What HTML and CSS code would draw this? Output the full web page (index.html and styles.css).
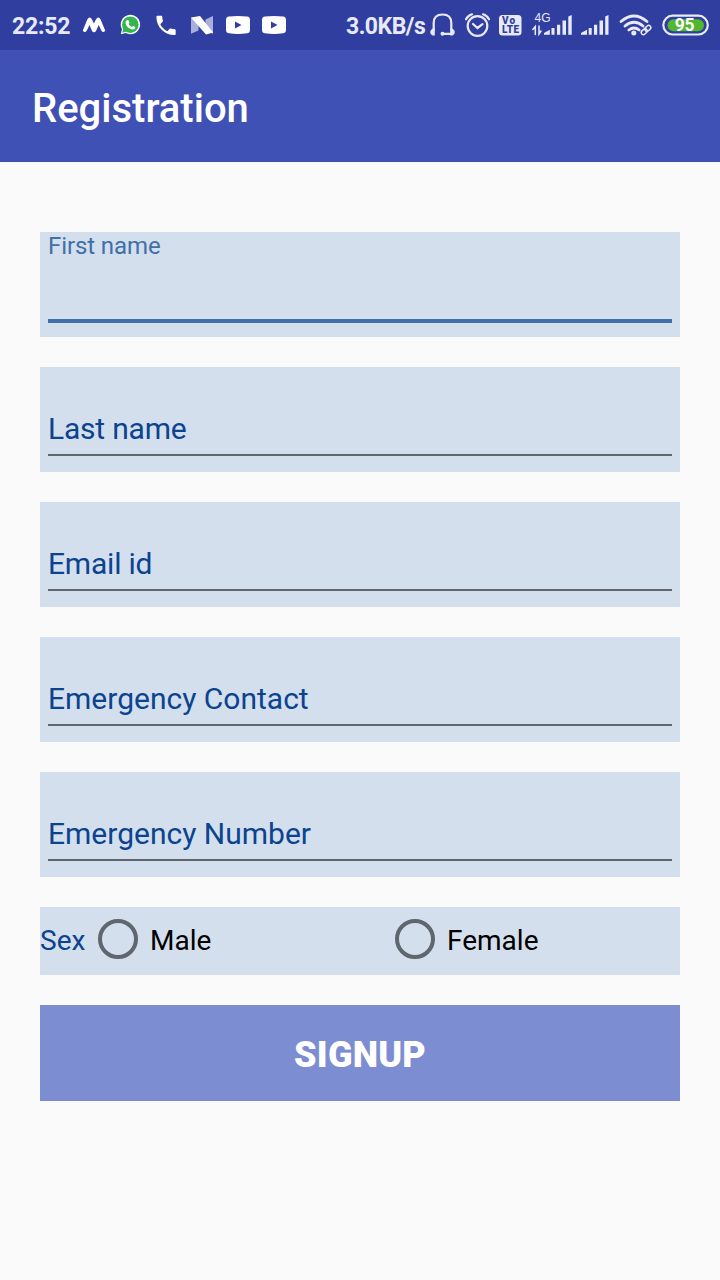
FILE: index.html
```html
<!DOCTYPE html>
<html lang="en">
<head>
<meta charset="utf-8">
<title>Registration</title>
<link rel="stylesheet" href="styles.css">
</head>
<body>
<header class="status-bar">
  <div class="notifications">
    <span class="clock">22:52</span>
    <svg width="24" height="50" viewBox="82 0 24 50"><path d="M82.800 30.500 L87.300 19.500 Q89.800 15.500 92 19.500 L93.900 23.500 L95.900 19.500 Q98.300 15.500 100.600 19.500 L105.200 30.500 Q103.300 33.500 101.300 30.500 L98.700 25 L96 31 Q94 33.500 92 31 L89.500 25 L86.800 30.500 Q84.800 33.500 82.800 30.500Z" fill="#fff"/></svg>
    <svg width="24" height="50" viewBox="118 0 24 50"><path d="M120.800 34.300 L122 29.300 A9.700 9.700 0 1 1 125.800 33 Z" fill="#fff"/><circle cx="130.300" cy="24.700" r="8.300" fill="#35b54c"/><path d="M122.300 32.700 L123.500 28 L127 31.500Z" fill="#35b54c"/><path d="M126.800 20.300 Q128.300 19.400 128.800 21 L129.500 22.700 L128.500 24 Q129.800 26.300 132 27 L133.100 25.900 L135.300 27.100 Q135.200 29.600 132.700 29.600 Q127 28.500 125.500 23.300 Q125.400 21.300 126.800 20.300Z" fill="#fff"/></svg>
    <svg width="24" height="50" viewBox="154 0 24 50"><path transform="translate(153.200 12.600) scale(1.070)" d="M6.620 10.790c1.440 2.830 3.760 5.140 6.590 6.590l2.200-2.200c.27-.27.67-.36 1.020-.24 1.120.37 2.330.57 3.570.57.550 0 1 .45 1 1V20c0 .55-.45 1-1 1-9.390 0-17-7.610-17-17 0-.55.45-1 1-1h3.500c.55 0 1 .45 1 1 0 1.250.2 2.450.57 3.570.11.350.030.740-.25 1.020l-2.200 2.200z" fill="#fff"/></svg>
    <svg width="24" height="50" viewBox="190 0 24 50"><path d="M191 17.500 L198.500 22 V30.500 L191 33.700Z M205.500 19.500 L213 16 V34 L205.500 29Z" fill="#a9afdb"/><path d="M191 17.500 L200 16 L213.200 32.500 L206 34.500Z" fill="#fff"/></svg>
    <svg width="24" height="50" viewBox="226 0 24 50"><path d="M229 16.500 Q238 15.300 247 16.500 Q250 16.700 250 20 V30 Q250 33 247 33.300 Q238 34.500 229 33.300 Q226 33 226 30 V20 Q226 16.800 229 16.500Z" fill="#fff"/><path d="M235 21.500 V28.500 L241.500 25Z" fill="#303f9f"/></svg>
    <svg width="24" height="50" viewBox="226 0 24 50"><path d="M229 16.500 Q238 15.300 247 16.500 Q250 16.700 250 20 V30 Q250 33 247 33.300 Q238 34.500 229 33.300 Q226 33 226 30 V20 Q226 16.800 229 16.500Z" fill="#fff"/><path d="M235 21.500 V28.500 L241.500 25Z" fill="#303f9f"/></svg>
  </div>
  <div class="system">
    <span class="speed">3.0KB/s</span>
    <svg width="28" height="50" viewBox="428 0 28 50"><path d="M433.700 30 V23 Q433.700 14.500 442.500 14.500 Q451.300 14.500 451.300 23 V30 M451 33.800 H443" class="line"/><path d="M433 28.500 H434.800 V35.500 H432.500 Q430.200 34.500 430.200 32 Q430.200 29.500 433 28.500Z M450.200 28.500 H452 Q454.800 29.500 454.800 32 Q454.800 34.500 452.500 35.500 H450.200Z" class="solid"/><circle cx="442.500" cy="33.800" r="2" class="solid"/></svg>
    <svg width="30" height="50" viewBox="463 0 30 50"><circle cx="477.500" cy="26" r="9.800" class="line"/><path d="M473 24 L477.500 28 L482.500 24.200 M466 19.300 Q468 15.500 472 14.300 M483 14.300 Q487 15.500 489 19.300" class="line"/></svg>
    <svg width="24" height="50" viewBox="498 0 24 50"><rect x="499" y="15" width="22.500" height="20.500" rx="3.500" class="solid"/><text x="502" y="24" class="volte" textLength="13">Vo</text><text x="502" y="33" class="volte" textLength="17">LTE</text></svg>
    <svg width="42" height="50" viewBox="532 0 42 50"><text x="534.500" y="21.800" class="network">4G</text><path d="M535.300 34.500 V26.500 L532.800 29.500 M539 26 V34 L541 31" class="line thin"/><path d="M544 34.700 V33 L549.800 29.800 V34.700Z M551.500 28 H554.500 V34.700 H551.500Z M557 24.800 H560.200 V34.700 H557Z M562.500 20.500 H566 V34.700 H562.500Z M568.300 16.500 L571.700 15 V34.700 H568.300Z" class="solid"/></svg>
    <svg width="29" height="50" viewBox="580 0 29 50"><path d="M581 34.700 V33 L587 29.800 V34.700Z M588.700 28 H591.700 V34.700 H588.700Z M594 24.800 H597.200 V34.700 H594Z M599.500 20.500 H603 V34.700 H599.500Z M605.200 16.500 L608.500 15 V34.700 H605.200Z" class="solid"/></svg>
    <svg width="34" height="50" viewBox="619 0 34 50"><path d="M621 21.500 Q634 10.500 647 21.500 M625 26 Q634 18.500 643 26 M628.800 30 Q634 26 639.200 30" class="line wifi"/><circle cx="633.800" cy="33" r="2.500" class="solid"/><g class="line thin" transform="rotate(-43 646 30)"><rect x="640.300" y="27.900" width="6.500" height="4.300" rx="2.100"/><rect x="645.200" y="27.900" width="6.500" height="4.300" rx="2.100"/></g></svg>
    <svg width="48" height="50" viewBox="662 0 48 50"><rect x="663.300" y="15.700" width="44.500" height="18.800" rx="9.400" class="line"/><rect x="667.500" y="19.300" width="36.500" height="12" rx="6" fill="#52b72d"/><text x="674.800" y="31.200" class="charge">95</text></svg>
  </div>
</header>
<div class="app-bar"><h1 class="title">Registration</h1></div>
<main class="form">
  <div class="field active"><span class="label">First name</span></div>
  <div class="field short"><span class="label">Last name</span></div>
  <div class="field short"><span class="label">Email id</span></div>
  <div class="field"><span class="label">Emergency Contact</span></div>
  <div class="field"><span class="label">Emergency Number</span></div>
  <div class="sex-row">
    <span class="sex-label">Sex</span>
    <label class="option"><span class="radio"></span>Male</label>
    <label class="option"><span class="radio"></span>Female</label>
  </div>
  <button class="signup">SIGNUP</button>
</main>
</body>
</html>
```
FILE: styles.css
```css
* { box-sizing: border-box; }
body {
  margin: 0;
  min-height: 1280px;
  background: #fafafa;
  font-family: Roboto, sans-serif;
}
svg { display: block; flex: none; }
.status-bar {
  display: flex;
  justify-content: space-between;
  height: 50px;
  padding: 0 10px 0 12px;
  background: #303f9f;
  color: #e8eafb;
}
.notifications { display: flex; gap: 12px; }
.clock, .speed {
  flex: none;
  font-size: 23px;
  font-weight: 700;
  line-height: 53px;
  white-space: nowrap;
}
.clock { width: 58px; letter-spacing: -0.2px; }
.speed { width: 80px; margin-right: -5px; letter-spacing: -0.5px; }
.system { display: flex; gap: 7px; }
.system svg:nth-of-type(2) { margin-right: -2px; }
.system svg:nth-of-type(3) { margin-right: 3px; }
.system svg:nth-of-type(4) { margin-right: -1px; }
.system svg:nth-of-type(5) { margin-right: 3px; }
.system svg:nth-of-type(6) { margin-right: 2px; }
.line { fill: none; stroke: #e8eafb; stroke-width: 2.2; stroke-linecap: round; }
.thin { stroke-width: 1.5; }
.wifi { stroke-width: 2.8; }
.solid { fill: #e8eafb; }
.volte { fill: #303f9f; font-size: 10px; font-weight: 900; }
.network { fill: #e8eafb; font: 500 12px "Liberation Sans", sans-serif; }
.charge { fill: #fff; font-size: 17.5px; font-weight: 700; letter-spacing: -0.3px; }
.app-bar {
  display: flex;
  align-items: center;
  height: 112px;
  padding: 5px 32px 0;
  background: #3f51b5;
}
.title { margin: 0; color: #fff; font-size: 40px; font-weight: 500; }
.form { display: flex; flex-direction: column; gap: 30px; padding: 70px 40px 0; }
.field { height: 105px; padding: 44px 8px 16px; background: #d4dfee; }
.label {
  display: block;
  height: 45px;
  border-bottom: 2px solid #60666e;
  color: #0b438f;
  font-size: 30px;
  line-height: 36px;
}
.short .label { letter-spacing: -0.2px; }
.active { padding-top: 0; padding-bottom: 14px; }
.active .label {
  height: 91px;
  border-bottom: 4px solid #3f70a8;
  color: #3f70a8;
  font-size: 24px;
  line-height: 28px;
  letter-spacing: -0.1px;
}
.sex-row {
  display: grid;
  grid-template-columns: 46px 297px 1fr;
  height: 68px;
  background: #d4dfee;
  font-size: 28px;
  line-height: 67px;
}
.sex-label { color: #0b438f; }
.option { display: flex; align-items: center; gap: 12px; padding: 0 0 0 12px; color: #000; height: 67px; }
.radio { width: 40px; height: 40px; margin-bottom: 3px; border: 4px solid #60666d; border-radius: 50%; }
.signup {
  height: 96px;
  padding: 3px 0 0;
  border: 0;
  background: #7d8dd2;
  color: #fff;
  font: 900 36px Roboto, sans-serif;
  letter-spacing: 0.2px;
}
```
